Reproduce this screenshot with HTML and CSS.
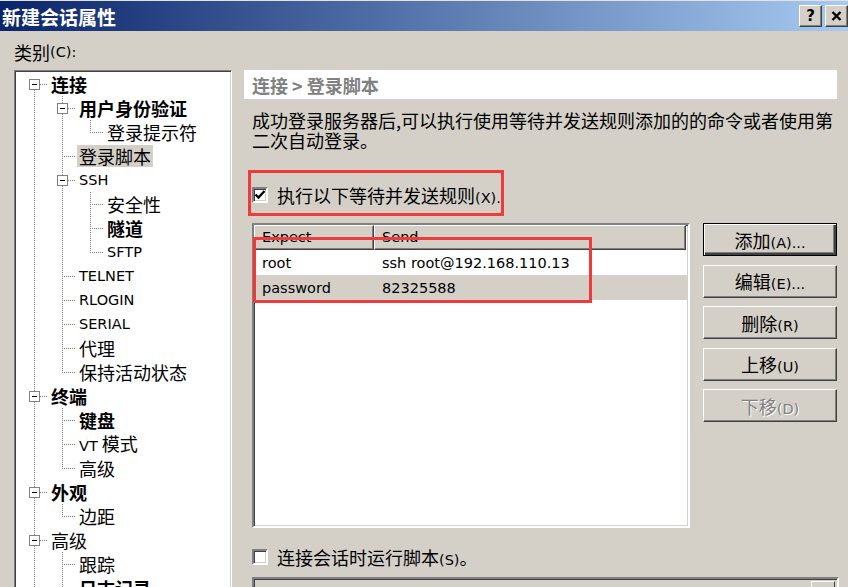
FILE: index.html
```html
<!DOCTYPE html>
<html lang="zh-CN">
<head>
    <meta charset="UTF-8">
    <meta name="viewport" content="width=device-width, initial-scale=1.0">
    <title>新建会话属性</title>
    <link rel="stylesheet" href="styles.css">
</head>
<body>
    <div class="titlebar">
        <span class="title">新建会话属性</span>
        <span class="cap-btn">?</span>
        <span class="cap-btn">
            <svg width="11" height="10" viewBox="0 0 11 10"><path d="M1.5 1 L9.5 9 M9.5 1 L1.5 9" stroke="#000" stroke-width="2.4"/></svg>
        </span>
    </div>

    <div class="main">
        <div class="left">
            <div class="cat-label">类别<span class="en">(C):</span></div>
            <div class="tree">
                <div class="row"><span class="cell first"><i class="box"></i></span><span class="label bold">连接</span></div>
                <div class="row"><span class="cell pipe"></span><span class="cell tee"><i class="box"></i></span><span class="label bold">用户身份验证</span></div>
                <div class="row"><span class="cell pipe"></span><span class="cell pipe"></span><span class="cell elbow"></span><span class="label">登录提示符</span></div>
                <div class="row"><span class="cell pipe"></span><span class="cell tee"></span><span class="label selected">登录脚本</span></div>
                <div class="row"><span class="cell pipe"></span><span class="cell tee"><i class="box"></i></span><span class="label en">SSH</span></div>
                <div class="row"><span class="cell pipe"></span><span class="cell pipe"></span><span class="cell tee"></span><span class="label">安全性</span></div>
                <div class="row"><span class="cell pipe"></span><span class="cell pipe"></span><span class="cell tee"></span><span class="label bold">隧道</span></div>
                <div class="row"><span class="cell pipe"></span><span class="cell pipe"></span><span class="cell elbow"></span><span class="label en">SFTP</span></div>
                <div class="row"><span class="cell pipe"></span><span class="cell tee"></span><span class="label en">TELNET</span></div>
                <div class="row"><span class="cell pipe"></span><span class="cell tee"></span><span class="label en">RLOGIN</span></div>
                <div class="row"><span class="cell pipe"></span><span class="cell tee"></span><span class="label en">SERIAL</span></div>
                <div class="row"><span class="cell pipe"></span><span class="cell tee"></span><span class="label">代理</span></div>
                <div class="row"><span class="cell pipe"></span><span class="cell elbow"></span><span class="label">保持活动状态</span></div>
                <div class="row"><span class="cell tee"><i class="box"></i></span><span class="label bold">终端</span></div>
                <div class="row"><span class="cell pipe"></span><span class="cell tee"></span><span class="label bold">键盘</span></div>
                <div class="row"><span class="cell pipe"></span><span class="cell tee"></span><span class="label"><span class="en">VT</span> 模式</span></div>
                <div class="row"><span class="cell pipe"></span><span class="cell elbow"></span><span class="label">高级</span></div>
                <div class="row"><span class="cell tee"><i class="box"></i></span><span class="label bold">外观</span></div>
                <div class="row"><span class="cell pipe"></span><span class="cell elbow"></span><span class="label">边距</span></div>
                <div class="row"><span class="cell tee"><i class="box"></i></span><span class="label">高级</span></div>
                <div class="row"><span class="cell pipe"></span><span class="cell tee"></span><span class="label">跟踪</span></div>
                <div class="row"><span class="cell pipe"></span><span class="cell tee"></span><span class="label bold">日志记录</span></div>
            </div>
        </div>

        <div class="right">
            <div class="page-head">连接 &gt; 登录脚本</div>
            <div class="pad">
                <p class="desc">成功登录服务器后,可以执行使用等待并发送规则添加的的命令或者使用第二次自动登录。</p>

                <div class="check-row first-check">
                    <span class="checkbox checked">
                        <svg width="12" height="12" viewBox="0 0 12 12"><path d="M1.5 5.5 L4.5 8.5 L10.5 2" fill="none" stroke="#000" stroke-width="2.4"/></svg>
                    </span>
                    <span>执行以下等待并发送规则<span class="en">(X).</span></span>
                    <div class="mark mark-check"></div>
                </div>

                <div class="rules">
                    <div class="listview">
                        <div class="lv-head">
                            <span class="lv-col col-expect en">Expect</span>
                            <span class="lv-col col-send en">Send</span>
                        </div>
                        <div class="lv-row en">
                            <span class="col-expect">root</span>
                            <span class="col-send">ssh root@192.168.110.13</span>
                        </div>
                        <div class="lv-row en alt">
                            <span class="col-expect">password</span>
                            <span class="col-send">82325588</span>
                        </div>
                        <div class="mark mark-list"></div>
                    </div>
                    <div class="buttons">
                        <button class="btn default">添加<span class="en">(A)...</span></button>
                        <button class="btn">编辑<span class="en">(E)...</span></button>
                        <button class="btn">删除<span class="en">(R)</span></button>
                        <button class="btn">上移<span class="en">(U)</span></button>
                        <button class="btn disabled">下移<span class="en">(D)</span></button>
                    </div>
                </div>

                <div class="check-row second-check">
                    <span class="checkbox"></span>
                    <span>连接会话时运行脚本<span class="en">(S)</span>。</span>
                </div>

                <div class="script-path">
                    <span class="browse"></span>
                </div>
            </div>
        </div>
    </div>
</body>
</html>
```

FILE: styles.css
```css
body {
    margin: 0;
    width: 848px;
    height: 587px;
    overflow: hidden;
    background: #d4d0c8;
    font-family: "Noto Sans CJK SC", sans-serif;
    font-size: 18px;
    color: #000;
}
.en {
    font-family: "DejaVu Sans", sans-serif;
    font-size: 14.5px;
}
.titlebar {
    height: 30px;
    border-top: 1px solid #e4e2dc;
    background: linear-gradient(to right, #0a246a, #a6caf0);
    display: flex;
    align-items: center;
    gap: 3px;
    padding: 0 0 0 2px;
}
.title {
    flex: 1;
    color: #fff;
    font-weight: bold;
    font-size: 19px;
    line-height: 1;
}
.cap-btn {
    width: 21px;
    height: 20px;
    display: flex;
    align-items: center;
    justify-content: center;
    background: #d4d0c8;
    border: 1px solid;
    border-color: #fff #404040 #404040 #fff;
    box-shadow: inset -1px -1px #808080;
    font-family: "DejaVu Sans", sans-serif;
    font-weight: bold;
    font-size: 15px;
}
.main {
    display: flex;
    gap: 12px;
    padding-left: 14px;
}
.left {
    width: 218px;
    flex: none;
}
.cat-label {
    height: 36px;
    padding-top: 3px;
    display: flex;
    align-items: center;
}
.tree {
    height: 520px;
    overflow: hidden;
    background: #fff;
    border: 1px solid;
    border-color: #808080 #fff #fff #808080;
    box-shadow: inset 1px 1px #404040, inset -1px -1px #d4d0c8;
    padding: 1px 0 0 5px;
}
.row {
    display: flex;
    align-items: center;
    height: 24px;
}
.cell {
    flex: none;
    width: 28px;
    height: 24px;
    display: flex;
    align-items: center;
    background-repeat: no-repeat;
}
.pipe {
    background-image: repeating-linear-gradient(to bottom, #808080 0 1px, transparent 1px 2px);
    background-size: 1px 24px;
    background-position: 14px 0;
}
.tee, .elbow, .first {
    background-image:
        repeating-linear-gradient(to bottom, #808080 0 1px, transparent 1px 2px),
        repeating-linear-gradient(to right, #808080 0 1px, transparent 1px 2px);
    background-position: 14px 0, 14px 12px;
    background-size: 1px 24px, 14px 1px;
}
.elbow {
    background-size: 1px 12px, 14px 1px;
}
.first {
    background-position: 14px 12px, 14px 12px;
    background-size: 1px 12px, 14px 1px;
}
.box {
    width: 9px;
    height: 9px;
    margin-left: 9px;
    border: 1px solid #808080;
    background: linear-gradient(#000, #000) no-repeat 2px 4px / 5px 1px, #fff;
}
.label {
    margin-left: 1px;
    padding: 0 2px;
    line-height: 22px;
    white-space: nowrap;
}
.label.en {
    font-size: 14.5px;
}
.bold {
    font-weight: bold;
}
.selected {
    background: #d4d0c8;
}
.right {
    width: 593px;
    flex: none;
    padding-top: 39px;
}
.page-head {
    height: 29px;
    background: #fff;
    color: #808080;
    font-weight: bold;
    display: flex;
    align-items: center;
    padding-left: 8px;
}
.pad {
    padding-left: 8px;
}
.desc {
    margin: 11px 0 0;
    line-height: 20px;
}
.check-row {
    position: relative;
    display: flex;
    align-items: center;
    gap: 9px;
    height: 24px;
}
.first-check {
    margin-top: 33px;
}
.second-check {
    margin-top: 17px;
}
.checkbox {
    width: 12px;
    height: 12px;
    display: flex;
    align-items: center;
    justify-content: center;
    background: #fff;
    border: 2px solid;
    border-color: #808080 #fff #fff #808080;
    box-shadow: inset 1px 1px #404040, inset -1px -1px #d4d0c8;
}
.mark {
    position: absolute;
    border: 3px solid #ee3a3a;
    pointer-events: none;
}
.mark-check {
    left: -4px;
    top: -13px;
    width: 250px;
    height: 40px;
}
.rules {
    display: flex;
    gap: 13px;
    margin-top: 16px;
}
.listview {
    position: relative;
    width: 434px;
    height: 301px;
    background: #fff;
    border: 2px solid;
    border-color: #808080 #fff #fff #808080;
    box-shadow: inset 1px 1px #404040, inset -1px -1px #d4d0c8;
    padding: 0;
}
.lv-head {
    display: flex;
    height: 25px;
    margin: 0 2px 0 0;
}
.lv-col {
    background: #d4d0c8;
    border: 1px solid;
    border-color: #fff #404040 #404040 #fff;
    box-shadow: inset -1px -1px #808080;
    line-height: 23px;
    padding-left: 7px;
}
.lv-head .col-expect {
    width: 111px;
    flex: none;
}
.lv-head .col-send {
    flex: 1;
}
.lv-row {
    display: flex;
    height: 25px;
    align-items: center;
}
.lv-row .col-expect {
    width: 111px;
    padding-left: 8px;
}
.lv-row .col-send {
    padding-left: 9px;
}
.alt {
    background: #d4d0c8;
}
.mark-list {
    left: -1px;
    top: 12px;
    width: 333px;
    height: 60px;
}
.buttons {
    width: 134px;
    display: flex;
    flex-direction: column;
    gap: 8.5px;
}
.btn {
    height: 33px;
    margin: 0;
    padding: 0;
    font-family: "Noto Sans CJK SC", sans-serif;
    font-size: 18px;
    color: #000;
    background: #d4d0c8;
    border: 1px solid;
    border-color: #fff #404040 #404040 #fff;
    box-shadow: inset -1px -1px #808080;
}
.btn.default {
    border-color: #000;
    box-shadow: inset 1px 1px #fff, inset -2px -2px #404040, inset -3px -3px #808080;
}
.btn.disabled {
    color: #808080;
    text-shadow: 1px 1px #fff;
}
.script-path {
    margin-top: 8px;
    width: 581px;
    height: 30px;
    background: #d4d0c8;
    border: 2px solid;
    border-color: #808080 #fff #fff #808080;
    box-shadow: inset 1px 1px #404040;
    display: flex;
    justify-content: flex-end;
    padding: 2px 2px 0 0;
}
.browse {
    width: 22px;
    height: 22px;
    background: #d4d0c8;
    border: 1px solid;
    border-color: #fff #404040 #404040 #fff;
}
```
